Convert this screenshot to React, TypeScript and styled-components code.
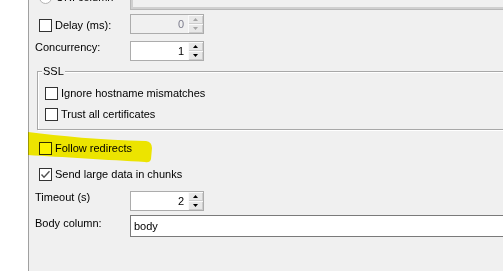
import React from "react";
import styled, { createGlobalStyle } from "styled-components";

const GlobalStyle = createGlobalStyle`
    html, body {
        margin: 0;
        padding: 0;
        background: #fff;
    }

    body {
        color: #000;
        font-family: "Liberation Sans", Arial, sans-serif;
        font-size: 11px;
        overflow: hidden;
    }
`;

const Page = styled.div`
    display: flex;
    height: 271px;
    overflow: hidden;
    position: relative;
    width: 503px;
`;

const Gutter = styled.div`
    background: #fff;
    flex: none;
    width: 28px;
`;

const Panel = styled.div`
    background: #f0f0f0;
    border-left: 1px solid #a0a0a0;
    display: flex;
    flex: 1;
    flex-direction: column;
    min-width: 0;
    overflow: hidden;
`;

const Row = styled.div<{ $top: number; $height: number }>`
    display: grid;
    flex: none;
    grid-template-columns: 101px 1fr;
    height: ${(p) => p.$height}px;
    margin-top: ${(p) => p.$top}px;
`;

const TopBox = styled.div`
    border-bottom: 1px solid #b8b8b8;
    border-left: 1px solid #b8b8b8;
    box-shadow: inset 2px -2px 0 #d0d0d0;
    box-sizing: border-box;
    height: 10px;
    margin-right: -10px;
`;

const RadioLabel = styled.label`
    align-items: center;
    display: flex;
    gap: 4px;
    height: 13px;
    line-height: 13px;
    margin-top: -9px;
    padding-left: 10px;
    white-space: nowrap;
`;

const Radio = styled.span`
    background: #fff;
    border: 1px solid #b4b4b4;
    border-radius: 50%;
    box-sizing: border-box;
    flex: none;
    height: 13px;
    width: 13px;
`;

const Label = styled.div<{ $pt?: number }>`
    line-height: 13px;
    padding-left: 6px;
    padding-top: ${(p) => p.$pt ?? 0}px;
    white-space: nowrap;
`;

const CheckLabel = styled.label<{ $indent?: number; $pt?: number }>`
    align-items: center;
    align-self: start;
    display: flex;
    gap: 3px;
    height: 13px;
    line-height: 13px;
    margin-top: ${(p) => p.$pt ?? 0}px;
    padding-left: ${(p) => p.$indent ?? 10}px;
    white-space: nowrap;
`;

const Box = styled.span`
    align-items: center;
    background: #fff;
    border: 1px solid #333;
    box-sizing: border-box;
    display: flex;
    flex: none;
    height: 13px;
    justify-content: center;
    width: 13px;
`;

const SpinField = styled.div<{ $disabled?: boolean }>`
    background: ${(p) => (p.$disabled ? "#f0f0f0" : "#fff")};
    border: 1px solid #acacac;
    box-sizing: border-box;
    color: ${(p) => (p.$disabled ? "#7c7c8c" : "#000")};
    display: flex;
    height: 20px;
    width: 74px;
`;

const SpinValue = styled.div`
    flex: 1;
    line-height: 18px;
    padding-right: 4px;
    text-align: right;
`;

const SpinButtons = styled.div`
    display: flex;
    flex-direction: column;
    width: 15px;
`;

const SpinButton = styled.div`
    align-items: center;
    background: #e8e8e8;
    box-shadow: inset 1px 1px 0 #fafafa, inset -1px -1px 0 #cdcdcd;
    display: flex;
    flex: 1;
    justify-content: center;
`;

const TextInput = styled.div`
    background: #fff;
    border: 1px solid #7a7a7a;
    box-sizing: border-box;
    height: 22px;
    line-height: 20px;
    margin-right: -20px;
    padding-left: 3px;
`;

const Group = styled.fieldset`
    border: 1px solid #a8a8a8;
    box-shadow: inset 1px 1px 0 #fff, 1px 1px 0 #fff;
    display: flex;
    flex: none;
    flex-direction: column;
    gap: 8px;
    margin: 4px -20px 0 8px;
    min-width: 0;
    padding: 9px 0 8px 0;
`;

const Legend = styled.legend`
    background: #f0f0f0;
    line-height: 13px;
    margin-left: 4px;
    padding: 0 1px;
`;

const Highlight = styled.svg`
    left: 0;
    mix-blend-mode: multiply;
    pointer-events: none;
    position: absolute;
    top: 0;
`;

const Check = ({ checked }: { checked?: boolean }) => (
    <Box>
        {checked && (
            <svg width="11" height="11" viewBox="0 0 11 11">
                <polyline points="1.5,5.5 4,8.2 9.5,2.3" fill="none" stroke="#505050" strokeWidth="1.4" />
            </svg>
        )}
    </Box>
);

const Arrow = ({ up, color }: { up?: boolean; color: string }) => (
    <svg width="5" height="3" viewBox="0 0 5 3">
        <polygon points={up ? "0,3 5,3 2.5,0" : "0,0 5,0 2.5,3"} fill={color} />
    </svg>
);

const Spinner = ({ value, disabled }: { value: string; disabled?: boolean }) => {
    const arrow = disabled ? "#a6a6a6" : "#000";
    return (
        <SpinField $disabled={disabled}>
            <SpinValue>{value}</SpinValue>
            <SpinButtons>
                <SpinButton><Arrow up color={arrow} /></SpinButton>
                <SpinButton><Arrow color={arrow} /></SpinButton>
            </SpinButtons>
        </SpinField>
    );
};

const App: React.FC = () => {
    return (
        <>
            <GlobalStyle />
            <Page>
                <Gutter />
                <Panel>
                    <Row $top={0} $height={10}>
                        <RadioLabel>
                            <Radio />
                            URI column
                        </RadioLabel>
                        <TopBox />
                    </Row>
                    <Row $top={4} $height={20}>
                        <CheckLabel $pt={5}>
                            <Check />
                            Delay (ms):
                        </CheckLabel>
                        <Spinner value="0" disabled />
                    </Row>
                    <Row $top={7} $height={20}>
                        <Label>Concurrency:</Label>
                        <Spinner value="1" />
                    </Row>
                    <Group>
                        <Legend>SSL</Legend>
                        <CheckLabel $indent={7}>
                            <Check />
                            Ignore hostname mismatches
                        </CheckLabel>
                        <CheckLabel $indent={7}>
                            <Check />
                            Trust all certificates
                        </CheckLabel>
                    </Group>
                    <Row $top={12} $height={13}>
                        <CheckLabel>
                            <Check />
                            Follow redirects
                        </CheckLabel>
                    </Row>
                    <Row $top={13} $height={13}>
                        <CheckLabel>
                            <Check checked />
                            Send large data in chunks
                        </CheckLabel>
                    </Row>
                    <Row $top={10} $height={20}>
                        <Label>Timeout (s)</Label>
                        <Spinner value="2" />
                    </Row>
                    <Row $top={4} $height={22}>
                        <Label $pt={2}>Body column:</Label>
                        <TextInput>body</TextInput>
                    </Row>
                </Panel>
                <Highlight width="503" height="271" viewBox="0 0 503 271">
                    <path
                        d="M28,132 C60,136 100,140 146,141 Q152,142 152,148 L151,159 Q150,163 145,162 C110,160 60,157 28,155 Z"
                        fill="#fbf300"
                    />
                </Highlight>
            </Page>
        </>
    );
};

export default App;
